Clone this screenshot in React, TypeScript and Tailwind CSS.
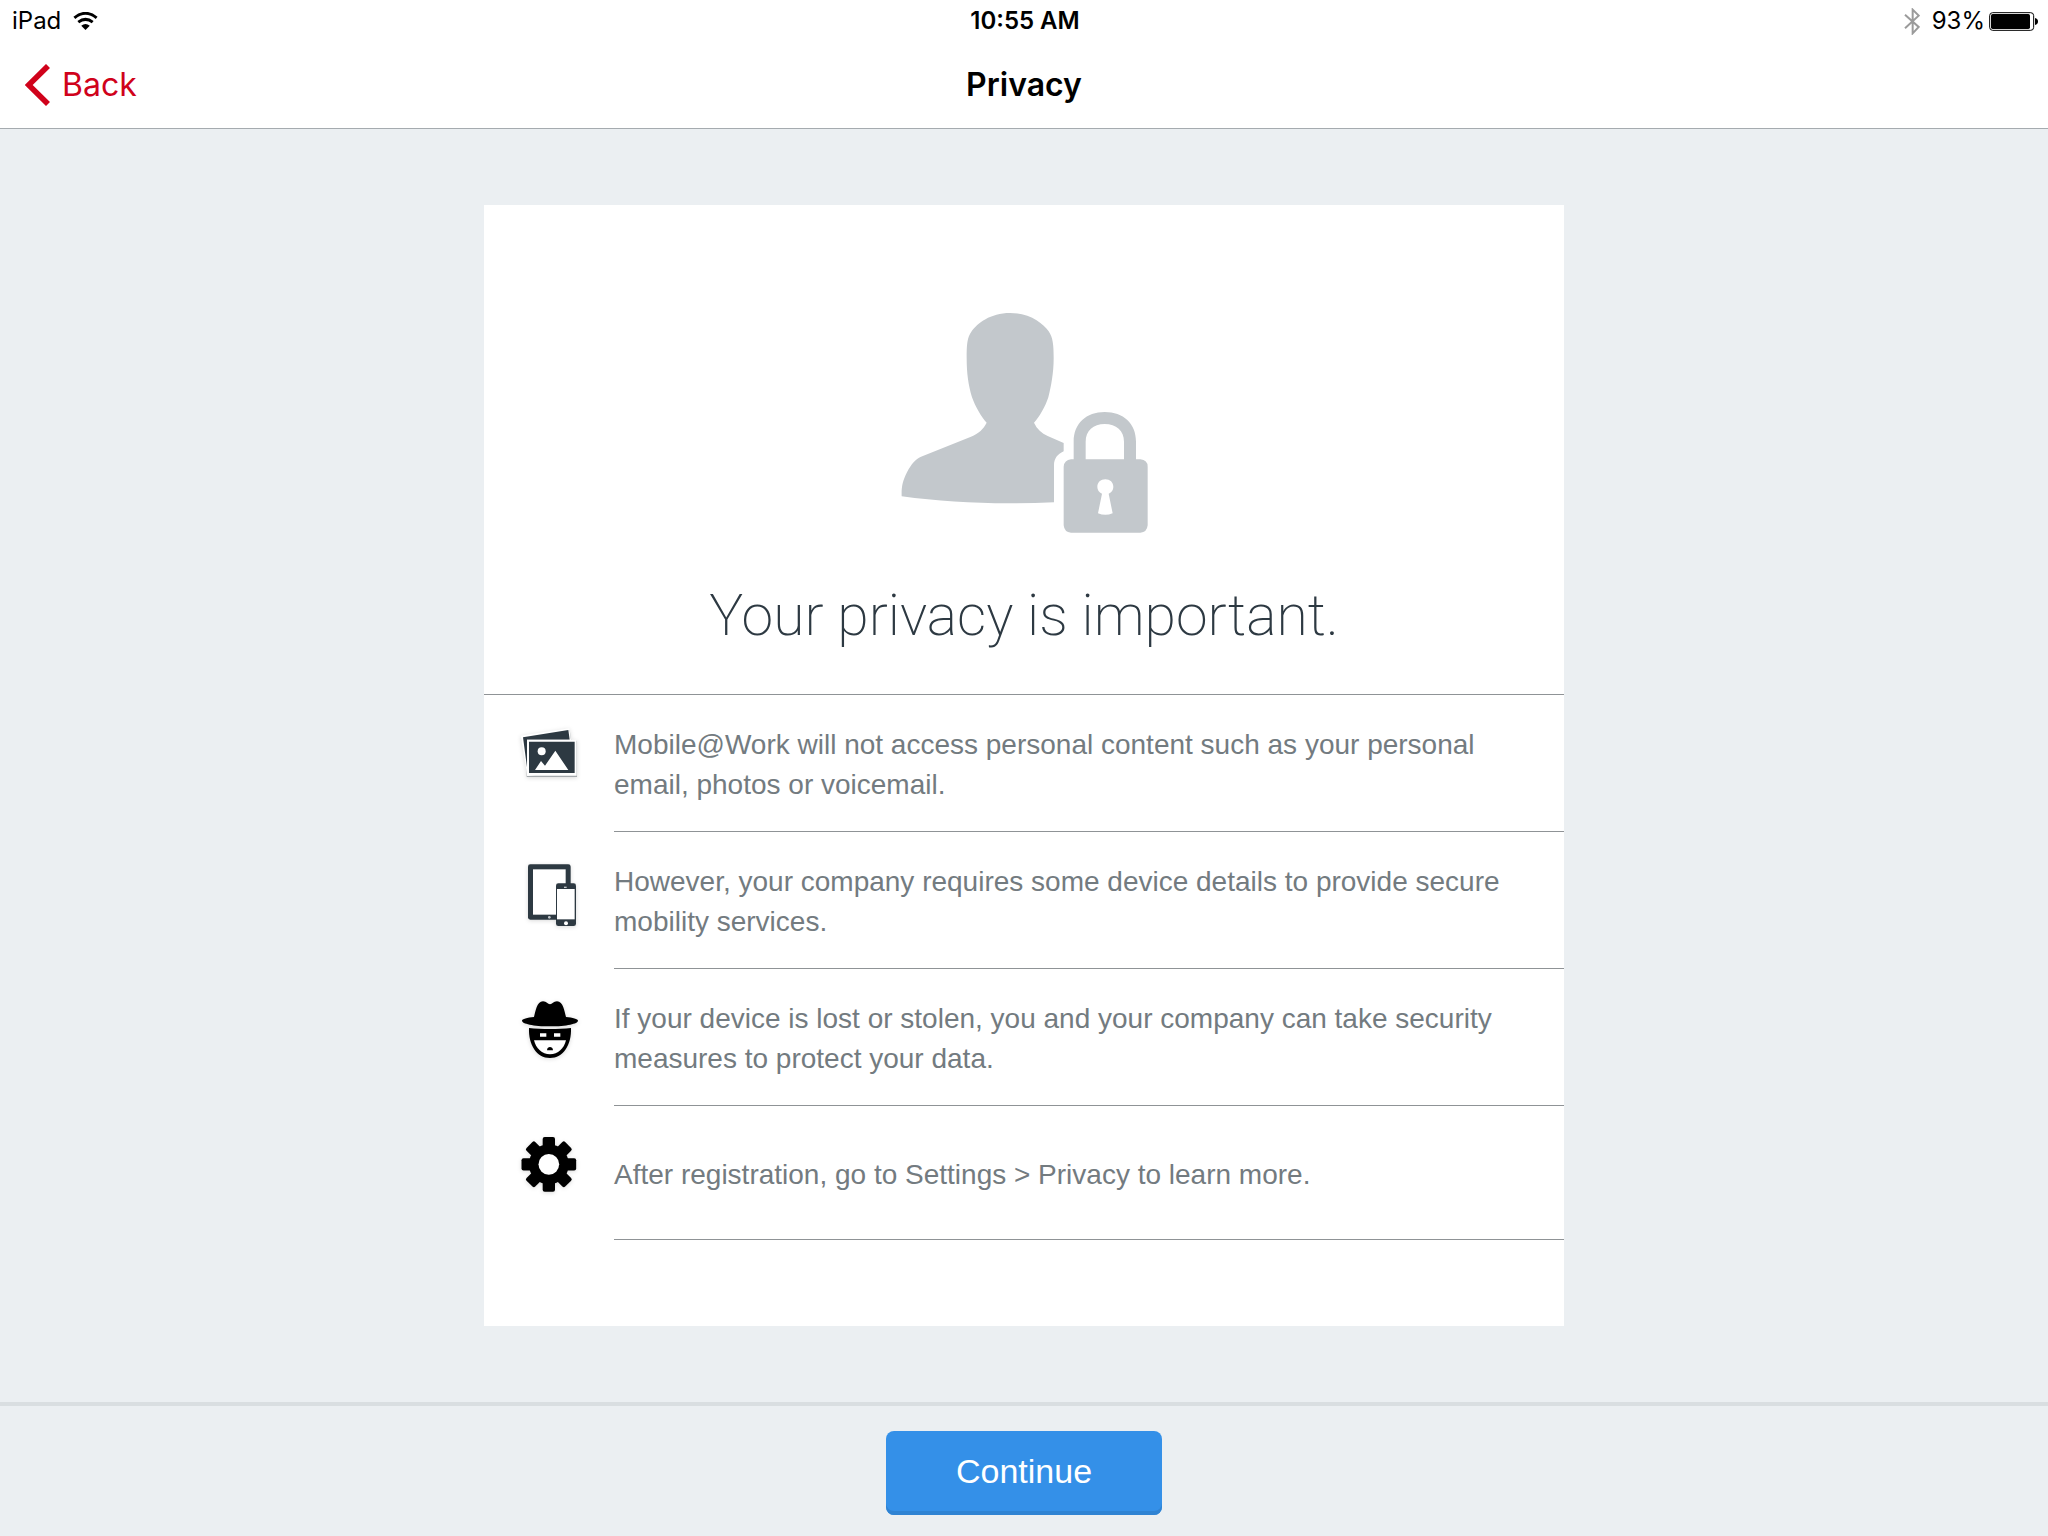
import type { ReactNode } from "react";

const PhotosIcon = () => (
  <svg viewBox="114 129 192 192" className="size-16 drop-shadow-sm" aria-hidden="true">
    <path d="M124 171 L269 150 L290 287 L144 291 Z" fill="#b4b8bb" />
    <path d="M140 182 H291 V291 H140 Z" fill="#a4a9ac" />
    <path d="M122 167 L268 145 L285 270 L142 288 Z" fill="#fff" />
    <path d="M129 172 L265 150 L269 179 L141 179 V262 Z" fill="#2d3942" />
    <path d="M141 179 H290 V287 H141 Z" fill="#fff" />
    <path d="M147 185 H284 V279 H147 Z" fill="#2d3942" />
    <circle cx="185" cy="214" r="12" fill="#fff" />
    <path d="M165 270 L183 243 L195 257 L226 212 L265 270 Z" fill="#fff" />
  </svg>
);

const DevicesIcon = () => (
  <svg viewBox="114 540 192 192" className="size-16 overflow-visible drop-shadow-sm" aria-hidden="true">
    <rect x="144" y="553" width="128" height="166" rx="7" fill="#2d3942" />
    <rect x="159" y="568" width="98" height="136" fill="#fff" />
    <circle cx="208" cy="712" r="4" fill="#c3c8cc" />
    <rect x="228" y="610" width="60" height="128" rx="7" fill="#2d3942" />
    <rect x="231" y="627" width="53" height="91" fill="#fff" />
    <rect x="252" y="620" width="8" height="4" fill="#c3c8cc" />
    <circle cx="258" cy="730" r="6" fill="#fff" />
  </svg>
);

const ThiefIcon = () => (
  <svg viewBox="114 114 192 192" className="size-16 drop-shadow-sm" aria-hidden="true">
    <path d="M162 174 C167 157 170 127 189 127 C200 127 203 136 210 136 C217 136 220 127 231 127 C250 127 253 157 258 174 C278 176 294 180 294 185 C294 194 260 202 210 202 C160 202 126 194 126 185 C126 180 142 176 162 174 Z" />
    <path d="M147 207 C185 211 235 211 273 207 C275 257 250 297 210 297 C170 297 145 257 147 207 Z" />
    <path d="M162 244 H258 C252 269 234 286 210 286 C186 286 168 269 162 244 Z" fill="#fff" />
    <path d="M180 223 H199 V233 H180 Z M222 223 H241 V233 H222 Z" fill="#fff" />
    <path d="M201 274 C201 267 206 264 210 264 C214 264 219 267 219 274 Z" />
  </svg>
);

const GearIcon = () => (
  <svg viewBox="114 525 192 192" className="size-16 drop-shadow-sm" aria-hidden="true">
    {[0, 45, 90, 135].map((angle) => (
      <rect
        key={angle}
        x="188"
        y="534"
        width="37"
        height="164"
        rx="6"
        transform={`rotate(${angle} 206.5 616)`}
      />
    ))}
    <circle cx="206.5" cy="616" r="60" />
    <circle cx="206.5" cy="616" r="31" fill="#fff" />
  </svg>
);

const PersonLockIcon = () => (
  <svg viewBox="64 69 738 660" className="w-[246px] h-[220px] overflow-visible" fill="#c3c8cc" aria-hidden="true">
    <path d="M391 69 C450 69 490 100 507 124 C520 143 522 165 522 205 C522 250 514 290 506 322 C498 348 478 383 463 398 C472 417 486 430 504 438 L552 459 V484 C533 493 523 506 523 526 V637 C360 644 210 639 66 619 C65 590 69 573 82 547 C95 521 108 507 124 500 L274 440 C298 430 311 417 321 398 C306 383 286 348 277 322 C266 285 261 250 261 205 C261 165 262 143 276 124 C293 100 332 69 391 69 Z" />
    <path
      fillRule="evenodd"
      d="M582 508 V455 C582 400 620 366 675 366 C731 366 769 400 769 455 V508 H782 Q804 510 804 530 V706 Q802 727 782 728 H574 Q554 727 552 706 V530 Q554 510 574 508 Z M618 508 H733 V455 C733 422 710 402 675 402 C641 402 618 422 618 455 Z M667 611 L655 670 Q677 679 699 670 L687 611 C696 607 701 600 701 591 C701 577 691 568 677 568 C663 568 653 577 653 591 C653 600 658 607 667 611 Z"
    />
  </svg>
);

const items: { icon: ReactNode; text: string }[] = [
  {
    icon: <PhotosIcon />,
    text: "Mobile@Work will not access personal content such as your personal email, photos or voicemail.",
  },
  {
    icon: <DevicesIcon />,
    text: "However, your company requires some device details to provide secure mobility services.",
  },
  {
    icon: <ThiefIcon />,
    text: "If your device is lost or stolen, you and your company can take security measures to protect your data.",
  },
  {
    icon: <GearIcon />,
    text: "After registration, go to Settings > Privacy to learn more.",
  },
];

const StatusBar = () => (
  <div className="grid h-[42px] grid-cols-3 items-center pl-3 pr-2.5 text-2xl text-black">
    <div className="flex items-center gap-3">
      <span>iPad</span>
      <svg viewBox="217 32 74 55" className="w-[25px] h-[18px]" aria-label="Wi-Fi">
        <path d="M220 50 Q254 22 288 50" fill="none" stroke="#000" strokeWidth="9" />
        <path d="M232 63 Q254 46 276 63" fill="none" stroke="#000" strokeWidth="9" />
        <path d="M241 74 Q254 63 267 74 L254 87 Z" />
      </svg>
    </div>
    <div className="text-center font-semibold">10:55 AM</div>
    <div className="flex items-center justify-end">
      <svg viewBox="132 21 46 81" className="mr-3 w-[16px] h-[27px]" aria-label="Bluetooth">
        <path
          d="M134 41 L175 78 L157 97 V26 L175 44 L134 82"
          fill="none"
          stroke="#9b9b9b"
          strokeWidth="6"
        />
      </svg>
      <span>93%</span>
      <svg viewBox="384 33 147 57" className="ml-1 w-[49px] h-[19px]" aria-label="Battery">
        <rect x="386" y="35" width="132" height="53" rx="9" fill="none" stroke="#000" strokeWidth="3" />
        <rect x="390" y="39" width="117" height="45" rx="5" />
        <path d="M522 51 C534 53 534 70 522 72 Z" />
      </svg>
    </div>
  </div>
);

const App = () => {
  return (
    <div className="flex min-h-screen flex-col bg-[#ebeff2] font-['Liberation_Sans',Arial,sans-serif]">
      <header className="border-b border-[#a5abaf] bg-white font-[Inter,sans-serif]">
        <StatusBar />
        <nav className="grid h-[86px] grid-cols-3 items-center px-[25px]">
          <button type="button" className="flex items-center gap-3 justify-self-start text-[32px] text-[#d0021b]">
            <svg viewBox="75 189 75 126" className="w-[25px] h-[42px]" aria-hidden="true">
              <path d="M144 195 L86 252 L144 309" fill="none" stroke="currentColor" strokeWidth="17" />
            </svg>
            Back
          </button>
          <h1 className="text-center text-[32px] font-semibold text-black">Privacy</h1>
        </nav>
      </header>

      <main className="flex flex-1 justify-center px-6 py-19">
        <section className="flex w-full max-w-[1080px] flex-col bg-white pb-[82px]">
          <div className="flex flex-col items-center border-b border-[#8f9396] pt-27 pb-10">
            <PersonLockIcon />
            <h2 className="mt-11 font-[Roboto,sans-serif] text-[57px] leading-[77px] font-extralight text-[#2d3942]">
              Your privacy is important.
            </h2>
          </div>
          <ul>
            {items.map((item) => (
              <li key={item.text} className="flex pl-[34px]">
                <div className="w-24 shrink-0 pt-7">{item.icon}</div>
                <div className="flex min-h-[134px] flex-1 items-center border-b border-[#8f9396] pt-[30px] pr-12 pb-[26px]">
                  <p className="text-[28px] leading-10 text-[#737b80]">{item.text}</p>
                </div>
              </li>
            ))}
          </ul>
        </section>
      </main>

      <footer className="flex justify-center border-t-4 border-[#d9dee1] pt-[25px] pb-[21px]">
        <button
          type="button"
          className="h-21 w-[276px] rounded-lg bg-[#3490e8] pb-1 text-[34px] text-white shadow-[inset_0_-4px_0_#2f83d3]"
        >
          Continue
        </button>
      </footer>
    </div>
  );
};

export default App;
